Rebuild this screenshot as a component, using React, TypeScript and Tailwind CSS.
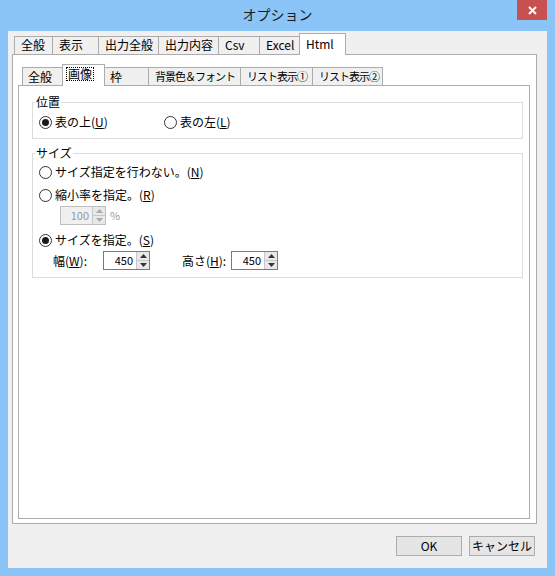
const font = { fontFamily: '"Noto Sans CJK JP", "Noto Sans", sans-serif' };

function Radio({ checked, label, k }: { checked?: boolean; label: string; k: string }) {
  return (
    <div className="flex items-center gap-[3px] h-[16px]">
      <span className="w-[13px] h-[13px] rounded-full border border-[#333333] bg-white flex items-center justify-center">
        {checked && <span className="w-[7px] h-[7px] rounded-full bg-[#1a1a1a]" />}
      </span>
      <span className="text-[12px] leading-none text-black whitespace-nowrap">
        {label}(<span className="underline">{k}</span>)
      </span>
    </div>
  );
}

function Spin({ value, width, disabled }: { value: string; width: string; disabled?: boolean }) {
  return (
    <div
      className={`flex h-[19px] border ${disabled ? "border-[#bfbfbf] bg-[#f0f0f0]" : "border-[#7a7a7a] bg-white"} ${width}`}
    >
      <span className={`flex-1 text-right pr-[3px] text-[11px] leading-[17px] ${disabled ? "text-[#9a9a9a]" : "text-black"}`}>
        {value}
      </span>
      <div className="w-[13px] flex flex-col border-l border-[#c8c8c8] bg-[#e8e8e8]">
        <span className={`flex-1 flex items-center justify-center border-b border-[#c8c8c8] ${disabled ? "text-[#aaaaaa]" : "text-[#333]"}`}>
          <svg width="7" height="4" viewBox="0 0 7 4"><path d="M0 4 L3.5 0 L7 4 Z" fill="currentColor" /></svg>
        </span>
        <span className={`flex-1 flex items-center justify-center ${disabled ? "text-[#aaaaaa]" : "text-[#333]"}`}>
          <svg width="7" height="4" viewBox="0 0 7 4"><path d="M0 0 L3.5 4 L7 0 Z" fill="currentColor" /></svg>
        </span>
      </div>
    </div>
  );
}

const outerTabs = ["全般", "表示", "出力全般", "出力内容", "Csv", "Excel", "Html"];
const outerW = ["w-[39px]", "w-[47px]", "w-[61px]", "w-[61px]", "w-[42px]", "w-[41px]", "w-[47px]"];
const innerTabs = ["全般", "画像", "枠", "背景色＆フォント", "リスト表示①", "リスト表示②"];
const innerW = ["w-[41px]", "w-[43px]", "w-[45px]", "w-[93px]", "w-[73px]", "w-[71px]"];
const tight = [false, false, false, true, true, true];

export default function App() {
  return (
    <div className="w-[555px] h-[576px] bg-[#8bc4f6] flex flex-col" style={font}>
      <div className="h-[31px] relative flex items-center justify-center">
        <span className="text-[14px] text-[#1b1b1b] pb-[2px]">オプション</span>
        <div className="absolute top-0 right-[8px] w-[30px] h-[20px] bg-[#c75050] flex items-center justify-center">
          <svg width="9" height="9" viewBox="0 0 9 9">
            <path d="M1 1 L8 8 M8 1 L1 8" stroke="white" strokeWidth="2" />
          </svg>
        </div>
      </div>
      <div className="flex-1 mx-[8px] mb-[8px] bg-[#f0f0f0] flex flex-col pl-[4px] pr-[10px] pt-[2px] pb-[44px] relative">
        <div className="flex items-end h-[21px] pl-[2px]">
          {outerTabs.map((t, i) => {
            const sel = i === 6;
            return (
              <div
                key={t}
                className={`${outerW[i]} flex items-start pl-[6px] text-[12px] leading-none whitespace-nowrap border border-[#acacac] border-b-0 -ml-px first:ml-0 ${
                  sel ? "h-[22px] bg-white -mb-px z-10 pt-[4px]" : "h-[18px] bg-[#f0f0f0] pt-[2px]"
                }`}
              >
                {t}
              </div>
            );
          })}
        </div>
        <div className="flex-1 bg-white border border-[#acacac] flex flex-col pl-[5px] pr-[6px] pt-[9px] pb-[4px]">
          <div className="flex items-end h-[21px] pl-[4px]">
            {innerTabs.map((t, i) => {
              const sel = i === 1;
              return (
                <div
                  key={t}
                  className={`${innerW[i]} flex items-start pl-[5px] leading-none whitespace-nowrap border border-[#acacac] border-b-0 -ml-px first:ml-0 ${
                    tight[i] ? "text-[11px] tracking-[-1px] pl-[6px]" : "text-[12px]"
                  } ${sel ? "h-[22px] bg-white -mb-px z-10 pt-[3px]" : "h-[18px] bg-[#f0f0f0] pt-[3px]"}`}
                >
                  <span className={sel ? "outline outline-1 outline-dotted outline-black px-[1px] -ml-[1px]" : ""}>{t}</span>
                </div>
              );
            })}
          </div>
          <div className="flex-1 border border-[#acacac] pl-[13px] pr-[6px] pt-[16px] flex flex-col">
            <div className="relative border border-[#dcdcdc] h-[37px] flex items-center pl-[6px] pt-[3px]">
              <span className="absolute -top-[9px] left-[2px] bg-white px-[1px] text-[12px] leading-[16px]">位置</span>
              <div className="w-[125px]">
                <Radio checked label="表の上" k="U" />
              </div>
              <Radio label="表の左" k="L" />
            </div>
            <div className="relative border border-[#dcdcdc] h-[125px] mt-[14px] flex flex-col pl-[6px] pt-[10px]">
              <span className="absolute -top-[9px] left-[2px] bg-white px-[1px] text-[12px] leading-[16px]">サイズ</span>
              <Radio label="サイズ指定を行わない。" k="N" />
              <div className="mt-[7px]">
                <Radio label="縮小率を指定。" k="R" />
              </div>
              <div className="flex items-center gap-[4px] pl-[21px] mt-[3px]">
                <Spin value="100" width="w-[46px]" disabled />
                <span className="text-[11px] text-[#9a9a9a]">%</span>
              </div>
              <div className="mt-[7px]">
                <Radio checked label="サイズを指定。" k="S" />
              </div>
              <div className="flex items-center pl-[14px] mt-[3px] text-[12px]">
                <span className="w-[50px] whitespace-nowrap">
                  幅(<span className="underline">W</span>):
                </span>
                <Spin value="450" width="w-[47px]" />
                <span className="ml-[32px] w-[49px] whitespace-nowrap">
                  高さ(<span className="underline">H</span>):
                </span>
                <Spin value="450" width="w-[47px]" />
              </div>
            </div>
          </div>
        </div>
        <div className="absolute right-[12px] bottom-[12px] flex gap-[7px]">
          <button className="w-[66px] h-[20px] border border-[#acacac] bg-[#e5e5e5] text-[12px] leading-none">OK</button>
          <button className="w-[66px] h-[20px] border border-[#acacac] bg-[#e5e5e5] text-[12px] leading-none">キャンセル</button>
        </div>
      </div>
    </div>
  );
}
